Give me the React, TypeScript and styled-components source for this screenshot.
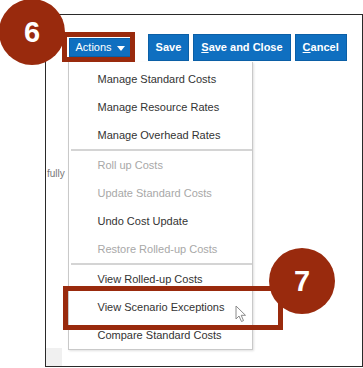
import React from 'react'
import styled, { createGlobalStyle, css } from 'styled-components'

const RUST = '#992a0d'
const BLUE = '#0f6fc0'

const GlobalStyle = createGlobalStyle`
  html, body {
    margin: 0;
    padding: 0;
    background: #fff;
  }
  body {
    font-family: "Liberation Sans", Arial, sans-serif;
  }
`

const Page = styled.div`
  position: relative;
  width: 363px;
  height: 368px;
  padding: 14px 0 0 45px;
  box-sizing: border-box;
  overflow: hidden;
  background: #fff;
`

const Frame = styled.div`
  width: 318px;
  height: 353px;
  box-sizing: border-box;
  border: 1.5px solid #2a2a2a;
  display: flex;
  flex-direction: column;
`

const Toolbar = styled.div`
  display: flex;
  align-items: center;
  padding: 18.5px 0 0 22.5px;
  height: 27px;
  box-sizing: content-box;
`

const Button = styled.button<{ small?: boolean }>`
  font-family: inherit;
  font-size: 11px;
  font-weight: bold;
  color: #fff;
  background: ${BLUE};
  border: 1px solid #0b5fa6;
  padding: 0 7px;
  height: 27px;
  margin-right: 4px;
  cursor: pointer;
  u {
    text-decoration: underline;
  }
  ${({ small }) =>
    small &&
    css`
      height: 19px;
      font-weight: normal;
      margin-right: 16px;
      padding: 0 6px;
    `}
`

const Caret = styled.span`
  display: inline-block;
  margin-left: 5px;
  border-left: 4px solid transparent;
  border-right: 4px solid transparent;
  border-top: 5px solid #fff;
  vertical-align: middle;
`

const Body = styled.div`
  flex: 1;
  display: flex;
  margin-top: 1px;
`

const Side = styled.div`
  width: 21.5px;
  display: flex;
  flex-direction: column;
  justify-content: space-between;
`

const Note = styled.span`
  margin-top: 106px;
  font-size: 10px;
  color: #777;
  padding-left: 1px;
  white-space: nowrap;
`

const Stub = styled.div<{ w: number }>`
  width: ${({ w }) => w}px;
  height: 18px;
  background: #f0f0f0;
`

const MenuColumn = styled.div`
  display: flex;
  flex-direction: column;
`

const Menu = styled.ul`
  list-style: none;
  margin: 0;
  padding: 3px 0 0;
  width: 185px;
  box-sizing: border-box;
  border: 1px solid #c9c9c9;
  border-top: none;
  box-shadow: 1px 1px 2px rgba(0, 0, 0, 0.12);
  background: #fff;
`

const Item = styled.li<{ disabled?: boolean }>`
  height: 28px;
  line-height: 28px;
  padding-left: 29px;
  font-size: 11px;
  color: ${({ disabled }) => (disabled ? '#a8a8a8' : '#333')};
  white-space: nowrap;
`

const Divider = styled.li`
  height: 2px;
  margin: 0 0 0 2px;
  background: #d4d4d4;
`

const Highlight = styled.div<{ x: number; y: number; w: number; h: number }>`
  position: absolute;
  left: ${({ x }) => x}px;
  top: ${({ y }) => y}px;
  width: ${({ w }) => w}px;
  height: ${({ h }) => h}px;
  box-sizing: border-box;
  border: 5px solid ${RUST};
`

const Badge = styled.div<{ x: number; y: number }>`
  position: absolute;
  left: ${({ x }) => x}px;
  top: ${({ y }) => y}px;
  width: 66px;
  height: 66px;
  border-radius: 50%;
  background: ${RUST};
  color: #fff;
  font-size: 29px;
  font-weight: bold;
  display: flex;
  align-items: center;
  justify-content: center;
`

const Pointer = styled.svg`
  position: absolute;
  left: 235px;
  top: 305px;
`

const groups: { label: string; disabled?: boolean }[][] = [
  [
    { label: 'Manage Standard Costs' },
    { label: 'Manage Resource Rates' },
    { label: 'Manage Overhead Rates' },
  ],
  [
    { label: 'Roll up Costs', disabled: true },
    { label: 'Update Standard Costs', disabled: true },
    { label: 'Undo Cost Update' },
    { label: 'Restore Rolled-up Costs', disabled: true },
  ],
  [
    { label: 'View Rolled-up Costs' },
    { label: 'View Scenario Exceptions' },
    { label: 'Compare Standard Costs' },
  ],
]

export default function App() {
  return (
    <>
      <GlobalStyle />
      <Page>
        <Frame>
          <Toolbar>
            <Button small>
              Actions
              <Caret />
            </Button>
            <Button>Save</Button>
            <Button>
              <u>S</u>ave and Close
            </Button>
            <Button>
              <u>C</u>ancel
            </Button>
          </Toolbar>
          <Body>
            <Side>
              <Note>fully</Note>
              <Stub w={16} />
            </Side>
            <MenuColumn>
              <Menu>
                {groups.map((group, gi) => (
                  <React.Fragment key={gi}>
                    {gi > 0 && <Divider />}
                    {group.map(item => (
                      <Item key={item.label} disabled={item.disabled}>
                        {item.label}
                      </Item>
                    ))}
                  </React.Fragment>
                ))}
              </Menu>
            </MenuColumn>
          </Body>
        </Frame>

        <Highlight x={62} y={32} w={73} h={30} />
        <Highlight x={63} y={286} w={220} h={44} />
        <Badge x={-1} y={-1}>6</Badge>
        <Badge x={269} y={248}>7</Badge>
        <Pointer width="12" height="18" viewBox="0 0 12 18">
          <path
            d="M1 1 L1 14 L4 11 L6.5 16.5 L8.5 15.6 L6.2 10.3 L10.5 10.3 Z"
            fill="#fff"
            stroke="#8a8a8a"
            strokeWidth="1"
            strokeLinejoin="round"
          />
        </Pointer>
      </Page>
    </>
  )
}
